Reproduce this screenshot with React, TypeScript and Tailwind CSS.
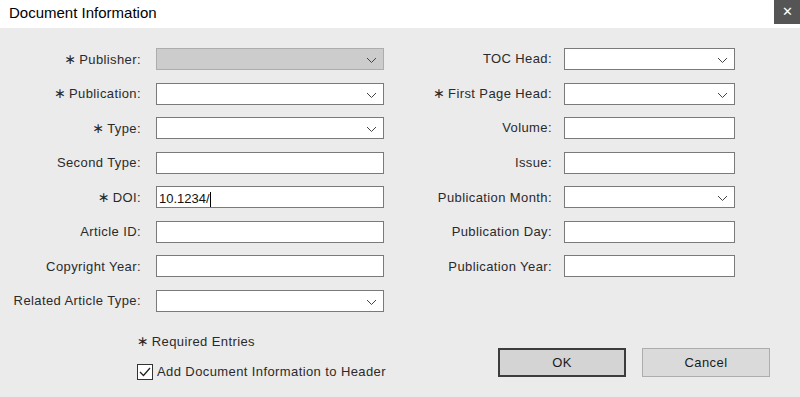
import { useState } from "react";

function Chevron() {
  return (
    <svg width="11" height="7" viewBox="0 0 11 7" className="absolute right-[6px] top-[8px]">
      <path d="M1 1l4.5 4.5L10 1" fill="none" stroke="#444" strokeWidth="1" />
    </svg>
  );
}

function Label({ text }: { text: string }) {
  // required fields get a centered asterisk like the original dialog
  if (text.startsWith("* ")) {
    return (
      <>
        <span className="text-[14px] mr-[3px] font-['DejaVu_Sans',sans-serif] tracking-[0px]">∗</span>
        {text.slice(2)}
      </>
    );
  }
  return <>{text}</>;
}

function Field({
  label,
  width,
  labelWidth,
  select,
  disabled,
  value,
}: {
  label: string;
  width: string;
  labelWidth: string;
  select?: boolean;
  disabled?: boolean;
  value?: string;
}) {
  return (
    <div className="flex items-center h-[22px]">
      <div className={`${labelWidth} text-right whitespace-nowrap`}>
        <Label text={label} />
      </div>
      <div
        className={`relative ${width} h-[22px] border ${
          disabled ? "bg-[#cccccc] border-[#adadad]" : "bg-white border-[#7a7a7a]"
        }`}
      >
        {value && (
          <div className="absolute left-[2px] top-[2px] flex items-center tracking-[0px] text-[#111]">
            <span>{value}</span>
            <span className="inline-block w-px h-[15px] bg-black"></span>
          </div>
        )}
        {select && <Chevron />}
      </div>
    </div>
  );
}

export default function App() {
  const [checked, setChecked] = useState(true);

  const left = [
    { label: "* Publisher:", select: true, disabled: true },
    { label: "* Publication:", select: true },
    { label: "* Type:", select: true },
    { label: "Second Type:" },
    { label: "* DOI:", value: "10.1234/" },
    { label: "Article ID:" },
    { label: "Copyright Year:" },
    { label: "Related Article Type:", select: true },
  ];

  const right = [
    { label: "TOC Head:", select: true },
    { label: "* First Page Head:", select: true },
    { label: "Volume:" },
    { label: "Issue:" },
    { label: "Publication Month:", select: true },
    { label: "Publication Day:" },
    { label: "Publication Year:" },
  ];

  return (
    <div className="w-[800px] h-[397px] bg-[#ebebeb] text-[13px] text-[#2a2a2a] tracking-[0.4px] font-['Liberation_Sans',Arial,sans-serif] overflow-hidden">
      {/* title bar */}
      <div className="flex items-start justify-between h-[28px] bg-white">
        <div className="pl-[9px] pt-[2px] text-[15px] tracking-[0px] text-black">Document Information</div>
        <div className="flex items-center justify-center w-[26px] h-[24px] bg-[#555555] text-white text-[13px] tracking-[0px]">
          ✕
        </div>
      </div>

      <div className="flex pt-[20px]">
        <div className="flex flex-col gap-[12.57px] w-[400px]">
          {left.map((f) => (
            <Field
              key={f.label}
              label={f.label}
              labelWidth="w-[141px] mr-[15px]"
              width="w-[228px]"
              select={f.select}
              disabled={f.disabled}
              value={f.value}
            />
          ))}
        </div>
        <div className="flex flex-col gap-[12.57px]">
          {right.map((f) => (
            <Field
              key={f.label}
              label={f.label}
              labelWidth="w-[152px] mr-[12px]"
              width="w-[171px]"
              select={f.select}
            />
          ))}
        </div>
      </div>

      <div className="flex">
        <div className="w-[498px] pl-[137px] pt-[20px]">
          <div className="h-[18px] leading-[18px]">
            <Label text="* Required Entries" />
          </div>
          <label className="flex items-center mt-[12px] cursor-pointer" onClick={() => setChecked(!checked)}>
            <span className="flex items-center justify-center w-[16px] h-[16px] bg-white border border-[#333333] mr-[4px]">
              {checked && (
                <svg width="12" height="10" viewBox="0 0 12 10">
                  <path d="M1 5l3.5 3.5L11 1" fill="none" stroke="#222" strokeWidth="1.3" />
                </svg>
              )}
            </span>
            <span>Add Document Information to Header</span>
          </label>
        </div>
        <div className="flex gap-[16px] pt-[36px]">
          <button className="w-[128px] h-[29px] bg-[#d4d4d4] border-2 border-[#3c3c3c] text-[#1a1a1a]">OK</button>
          <button className="w-[128px] h-[29px] bg-[#dadada] border border-[#adadad] text-[#1a1a1a]">Cancel</button>
        </div>
      </div>
    </div>
  );
}
